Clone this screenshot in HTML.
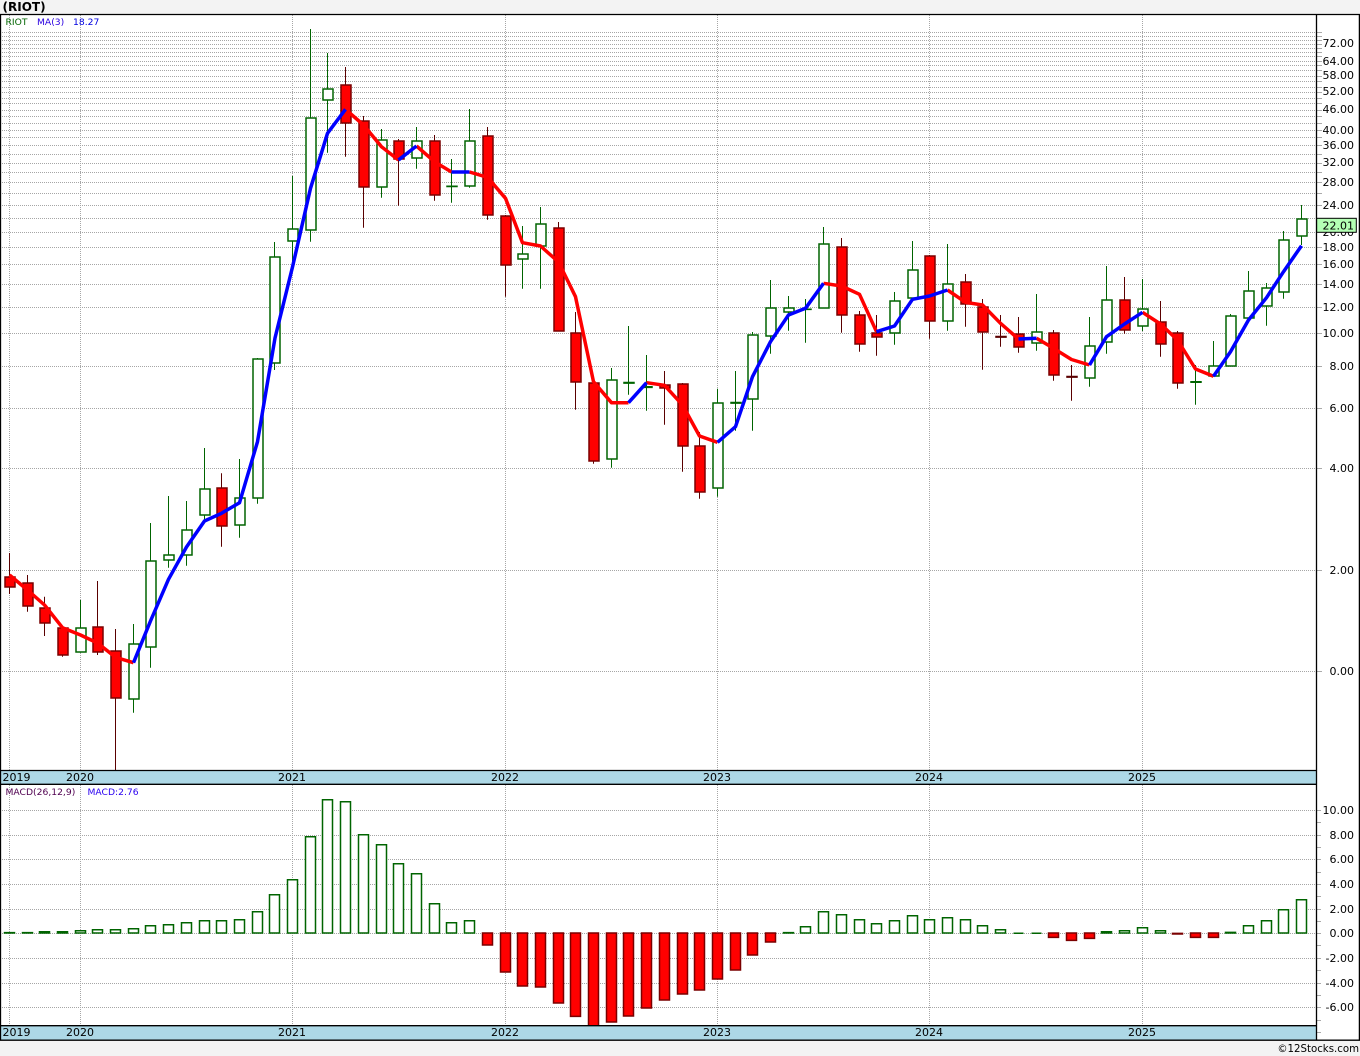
<!DOCTYPE html>
<html><head><meta charset="utf-8"><title>RIOT</title>
<style>
html,body{margin:0;padding:0;background:#f3f3f3;width:1360px;height:1056px;overflow:hidden}
svg{display:block;position:absolute;left:0;top:0}
text{font-family:"DejaVu Sans","Liberation Sans",sans-serif}
.a{font-size:11px;fill:#000;text-anchor:end}
.y{font-size:11px;fill:#000;text-anchor:middle}
.l{font-size:9.2px}
</style></head><body>
<svg width="1360" height="1056" viewBox="0 0 1360 1056">
<rect x="0" y="0" width="1360" height="1056" fill="#f3f3f3"/>
<rect x="0" y="14" width="1360" height="1026" fill="#fff"/>
<text x="2.5" y="11" font-size="12" font-weight="bold" fill="#000">(RIOT)</text>

<!-- grid -->
<path fill="none" stroke="#a6a6a6" stroke-width="1" stroke-dasharray="1 1" d="M2 32.5H1316M2 36.5H1316M2 40.5H1316M2 44.5H1316M2 48.5H1316M2 52.5H1316M2 56.5H1316M2 61.5H1316M2 65.5H1316M2 70.5H1316M2 76.5H1316M2 81.5H1316M2 87.5H1316M2 92.5H1316M2 98.5H1316M2 103.5H1316M2 110.5H1316M2 116.5H1316M2 123.5H1316M2 130.5H1316M2 137.5H1316M2 145.5H1316M2 154.5H1316M2 163.5H1316M2 172.5H1316M2 182.5H1316M2 193.5H1316M2 205.5H1316M2 218.5H1316M2 232.5H1316M2 247.5H1316M2 264.5H1316M2 284.5H1316M2 307.5H1316M2 333.5H1316M2 366.5H1316M2 408.5H1316M2 468.5H1316M2 570.5H1316M2 671.5H1316
M2 810.5H1316M2 835.5H1316M2 859.5H1316M2 884.5H1316M2 909.5H1316M2 933.5H1316M2 958.5H1316M2 983.5H1316M2 1007.5H1316
M9.5 15V770M80.5 15V770M292.5 15V770M505.5 15V770M717.5 15V770M929.5 15V770M1142.5 15V770
M9.5 785V1026M80.5 785V1026M292.5 785V1026M505.5 785V1026M717.5 785V1026M929.5 785V1026M1142.5 785V1026"/>
<!-- ticks -->
<path fill="none" stroke="#aaa" stroke-width="1" d="M1317 32.5h5M1317 36.5h5M1317 40.5h5M1317 44.5h5M1317 48.5h5M1317 52.5h5M1317 56.5h5M1317 61.5h5M1317 65.5h5M1317 70.5h5M1317 76.5h5M1317 81.5h5M1317 87.5h5M1317 92.5h5M1317 98.5h5M1317 103.5h5M1317 110.5h5M1317 116.5h5M1317 123.5h5M1317 130.5h5M1317 137.5h5M1317 145.5h5M1317 154.5h5M1317 163.5h5M1317 172.5h5M1317 182.5h5M1317 193.5h5M1317 205.5h5M1317 247.5h5M1317 264.5h5M1317 284.5h5M1317 307.5h5M1317 333.5h5M1317 366.5h5M1317 408.5h5M1317 468.5h5M1317 570.5h5M1317 671.5h5
M1317 810.5h4M1317 822.5h4M1317 835.5h4M1317 847.5h4M1317 859.5h4M1317 872.5h4M1317 884.5h4M1317 896.5h4M1317 909.5h4M1317 921.5h4M1317 933.5h4M1317 945.5h4M1317 958.5h4M1317 970.5h4M1317 983.5h4M1317 995.5h4M1317 1007.5h4M1317 1020.5h4M1317 1032.5h4"/>

<!-- wicks -->
<path fill="none" stroke="#006400" stroke-width="1" d="M80.5 600V652.7M133.5 624V712.7M150.5 523V667.7M168.5 496V567.7M186.5 501V565.7M204.5 448V520M239.5 459V537.7M257.5 358V503.7M274.5 242V370M292.5 176V265M310.5 29V241.7M327.5 53V152.7M381.5 129V197.7M416.5 127V168.7M451.5 159V202.7M469.5 109V187.7M522.5 226V288.7M540.5 207V288.7M611.5 368V467.7M628.5 326V394.7M646.5 355V410.7M717.5 388.7V496.7M735.5 371V430.7M752.5 332V430.7M770.5 280V353.7M788.5 296V330.7M805.5 299V342.7M823.5 227V308M894.5 292V344.7M912.5 241V298M947.5 244V330.7M1036.5 294V350.7M1089.5 317V386.7M1106.5 266V353.7M1142.5 279V331M1195.5 365V404.7M1213.5 341V376.7M1230.5 314V366M1248.5 271V318M1266.5 283V325.7M1283.5 231V298.7M1301.5 205V245"/>
<path fill="none" stroke="#5a0000" stroke-width="1" d="M9.5 553V594M27.5 575V611.7M44.5 596.7V636M62.5 627V656.7M97.5 581V655M115.5 629V770M221.5 473.3V546.7M345.5 67V156.7M363.5 116V227.7M398.5 139V205.7M434.5 135V200.7M487.5 127V219.7M505.5 215V296.7M558.5 222V331M575.5 312V409.7M593.5 382V463.7M664.5 371V424.7M682.5 383V471.7M699.5 432V498.7M841.5 238V332.7M859.5 311V351.7M876.5 315V355.7M929.5 255V338.7M965.5 274V326.7M982.5 299V369.7M1000.5 315V346.7M1018.5 317V352.7M1053.5 330V380.7M1071.5 365V400.7M1124.5 277V333.7M1160.5 301V356.7M1177.5 331V388.7"/>

<!-- green bodies -->
<path fill="#fff" stroke="#006400" stroke-width="1.5" d="M76 628h10v24h-10zM129 644h10v55h-10zM146 561h10v86h-10zM164 555h10v5h-10zM182 530h10v25h-10zM200 489h10v26h-10zM235 498h10v27h-10zM253 359h10v139h-10zM270 257h10v106h-10zM288 229h10v12h-10zM306 118h10v112h-10zM323 89h10v11h-10zM377 140h10v47h-10zM412 141h10v17h-10zM447 186.3h10v.2h-10zM465 141h10v45h-10zM518 254h10v5h-10zM536 224h10v22h-10zM607 380h10v79h-10zM624 382.5h10v.6h-10zM642 386.8h10v.6h-10zM713 403h10v85h-10zM731 402.5h10v.6h-10zM748 335h10v64h-10zM766 308h10v28h-10zM784 308h10v4h-10zM801 309.2h10v.2h-10zM819 244h10v64h-10zM890 301h10v32h-10zM908 270h10v28h-10zM943 284h10v37h-10zM1032 332h10v11h-10zM1085 346h10v32h-10zM1102 300h10v42h-10zM1138 309h10v17h-10zM1191 381.7h10v.6h-10zM1209 366h10v10h-10zM1226 316h10v50h-10zM1244 291h10v27h-10zM1262 288h10v18h-10zM1279 240h10v52h-10zM1297 219h10v17h-10z"/>
<!-- red bodies -->
<path fill="#f00" stroke="#7a0000" stroke-width="1.5" d="M5 577h10v10h-10zM23 583h10v23h-10zM40 608h10v15h-10zM58 628h10v27h-10zM93 627h10v25h-10zM111 651h10v47h-10zM217 488h10v38h-10zM341 85h10v38h-10zM359 121h10v66h-10zM394 141h10v18h-10zM430 141h10v54h-10zM483 136h10v79h-10zM501 216h10v49h-10zM554 228h10v103h-10zM571 333h10v49h-10zM589 383h10v78h-10zM660 385h10v3h-10zM678 384h10v62h-10zM695 446h10v46h-10zM837 247h10v68h-10zM855 315h10v29h-10zM872 333h10v4h-10zM925 256h10v65h-10zM961 282h10v22h-10zM978 307h10v25h-10zM1014 334h10v13h-10zM1049 333h10v42h-10zM1120 300h10v30h-10zM1156 322h10v22h-10zM1173 333h10v50h-10z"/>
<path fill="#5a0000" stroke="#5a0000" stroke-width="1.5" d="M996 336.5h10v.6h-10zM1067 376.5h10v.6h-10z"/>

<!-- MA -->
<g fill="none" stroke-width="3.5" stroke-linejoin="round" stroke-linecap="butt">
<path stroke="#f00" d="M9.5 575L27.5 590L44.5 605L62.5 627.7L80.5 635L97.5 643L115.5 657.3L133.5 662.7
M345.5 109.3L363.5 125L381.5 146.7L398.5 160
M416.5 146L434.5 161.7L451.5 172
M469.5 172L487.5 177.3L505.5 198.3L522.5 242.7L540.5 246L558.5 262L575.5 296.7L593.5 381.7L611.5 402.7L628.5 402.7
M646.5 382.7L664.5 385.3L682.5 405L699.5 436L717.5 442.3
M823.5 283.3L841.5 286L859.5 294.3L876.5 331.7
M947.5 290L965.5 302.3L982.5 305L1000.5 323.3L1018.5 339
M1036.5 338.3L1053.5 348.3L1071.5 359.5L1089.5 365
M1142.5 312.3L1160.5 324L1177.5 340L1195.5 369L1213.5 376.3"/>
<path stroke="#00f" d="M133.5 662.7L150.5 621L168.5 579.3L186.5 547L204.5 521L221.5 513.3L239.5 502.7L257.5 441.7L275 338L292.5 267L310.5 188.3L327.5 133.3L345.5 109.3
M398.5 160L416.5 146
M451.5 172L469.5 172
M628.5 402.7L646.5 382.7
M717.5 442.3L735.5 426.7L752.5 376.7L770.5 341.7L788.5 315L805.5 308.3L823.5 283.3
M876.5 331.7L894.5 326L912.5 299.3L929.5 296L947.5 290
M1018.5 339L1036.5 338.3
M1089.5 365L1106.5 336.7L1124.5 324L1142.5 312.3
M1213.5 376.3L1230.5 351.7L1248.5 320L1266.5 297.7L1283.5 271.7L1301.5 245.7"/>
</g>

<!-- MACD bars -->
<path fill="#fff" stroke="#006400" stroke-width="1.5" d="M4.5 933V932.6h10V933zM22.5 933V932.6h10V933zM39.5 933V931.8h10V933zM57.5 933V931.8h10V933zM75.5 933V930.8h10V933zM92.5 933V929.8h10V933zM110.5 933V929.8h10V933zM128.5 933V928.8h10V933zM145.5 933V925.8h10V933zM163.5 933V924.8h10V933zM181.5 933V922.8h10V933zM199.5 933V920.8h10V933zM216.5 933V920.8h10V933zM234.5 933V919.8h10V933zM252.5 933V911.8h10V933zM269.5 933V894.8h10V933zM287.5 933V879.8h10V933zM305.5 933V836.8h10V933zM322.5 933V799.8h10V933zM340.5 933V801.8h10V933zM358.5 933V834.8h10V933zM376.5 933V844.8h10V933zM393.5 933V863.8h10V933zM411.5 933V873.8h10V933zM429.5 933V903.8h10V933zM446.5 933V922.8h10V933zM464.5 933V920.8h10V933z
M783.5 933V932.6h10V933zM800.5 933V926.8h10V933zM818.5 933V911.8h10V933zM836.5 933V914.8h10V933zM854.5 933V919.8h10V933zM871.5 933V923.8h10V933zM889.5 933V920.8h10V933zM907.5 933V915.8h10V933zM924.5 933V919.8h10V933zM942.5 933V917.8h10V933zM960.5 933V919.8h10V933zM977.5 933V925.8h10V933zM995.5 933V929.8h10V933zM1013.5 933.2h10M1031.5 933.2h10M1101.5 933V931.8h10V933zM1119.5 933V930.8h10V933zM1137.5 933V927.8h10V933zM1155.5 933V930.8h10V933zM1225.5 933V932.4h10V933zM1243.5 933V925.8h10V933zM1261.5 933V920.8h10V933zM1278.5 933V909.8h10V933zM1296.5 933V899.8h10V933z"/>
<path fill="#f00" stroke="#7a0000" stroke-width="1.5" d="M482.5 933V945h10V933zM500.5 933V972h10V933zM517.5 933V986h10V933zM535.5 933V987h10V933zM553.5 933V1003h10V933zM570.5 933V1016.4h10V933zM588.5 933V1026h10V933zM606.5 933V1022h10V933zM623.5 933V1016h10V933zM641.5 933V1008h10V933zM659.5 933V1000h10V933zM677.5 933V994h10V933zM694.5 933V990h10V933zM712.5 933V979h10V933zM730.5 933V970h10V933zM747.5 933V955h10V933zM765.5 933V942h10V933zM1048.5 933V937.4h10V933zM1066.5 933V940.4h10V933zM1084.5 933V938.4h10V933zM1172.5 933.4V934h10V933.4zM1190.5 933V937.4h10V933zM1208.5 933V937.4h10V933z"/>

<!-- bands -->
<rect x="0" y="770.5" width="1316" height="13.5" fill="#add8e6"/>
<rect x="0" y="1025.5" width="1316" height="14.5" fill="#add8e6"/>
<path fill="none" stroke="#000" stroke-width="1.3" d="M0 14.5H1360M0 770.5H1316M0 784.3H1316M0 1025.7H1316M0 1040.2H1360M1316.5 14V1040M1359.4 14V1040M.5 14V1040"/>

<!-- legends -->
<text class="l" x="5.5" y="25" fill="#006400">RIOT</text>
<text class="l" x="37" y="25" fill="#2a00e0">MA(3)</text>
<text class="l" x="73" y="25" fill="#0000e0">18.27</text>
<text class="l" x="5.5" y="795" fill="#500050">MACD(26,12,9)</text>
<text class="l" x="87.5" y="795" fill="#2a00f0">MACD:2.76</text>

<!-- price axis -->
<text class="a" x="1354" y="47">72.00</text>
<text class="a" x="1354" y="65">64.00</text>
<text class="a" x="1354" y="79">58.00</text>
<text class="a" x="1354" y="95">52.00</text>
<text class="a" x="1354" y="113">46.00</text>
<text class="a" x="1354" y="134">40.00</text>
<text class="a" x="1354" y="149">36.00</text>
<text class="a" x="1354" y="166">32.00</text>
<text class="a" x="1354" y="186">28.00</text>
<text class="a" x="1354" y="209">24.00</text>
<text class="a" x="1354" y="236">20.00</text>
<text class="a" x="1354" y="251">18.00</text>
<text class="a" x="1354" y="268">16.00</text>
<text class="a" x="1354" y="288">14.00</text>
<text class="a" x="1354" y="311">12.00</text>
<text class="a" x="1354" y="337">10.00</text>
<text class="a" x="1354" y="370">8.00</text>
<text class="a" x="1354" y="412">6.00</text>
<text class="a" x="1354" y="472">4.00</text>
<text class="a" x="1354" y="574">2.00</text>
<text class="a" x="1354" y="675">0.00</text>
<rect x="1316.7" y="218.3" width="39.6" height="14" fill="#b4ffb4" stroke="#000" stroke-width="1"/>
<text class="a" x="1354" y="229.5">22.01</text>

<!-- macd axis -->
<text class="a" x="1354" y="814">10.00</text>
<text class="a" x="1354" y="839">8.00</text>
<text class="a" x="1354" y="863">6.00</text>
<text class="a" x="1354" y="888">4.00</text>
<text class="a" x="1354" y="913">2.00</text>
<text class="a" x="1354" y="937">0.00</text>
<text class="a" x="1354" y="962">-2.00</text>
<text class="a" x="1354" y="987">-4.00</text>
<text class="a" x="1354" y="1011">-6.00</text>

<!-- year labels -->
<text x="2.5" y="781" font-size="11" fill="#000">2019</text>
<text class="y" x="80" y="781">2020</text>
<text class="y" x="292" y="781">2021</text>
<text class="y" x="505" y="781">2022</text>
<text class="y" x="717" y="781">2023</text>
<text class="y" x="929" y="781">2024</text>
<text class="y" x="1142" y="781">2025</text>
<text x="2.5" y="1036" font-size="11" fill="#000">2019</text>
<text class="y" x="80" y="1036">2020</text>
<text class="y" x="292" y="1036">2021</text>
<text class="y" x="505" y="1036">2022</text>
<text class="y" x="717" y="1036">2023</text>
<text class="y" x="929" y="1036">2024</text>
<text class="y" x="1142" y="1036">2025</text>

<text x="1359" y="1052" font-size="10.2" fill="#000" text-anchor="end">©12Stocks.com</text>
</svg>
</body></html>
